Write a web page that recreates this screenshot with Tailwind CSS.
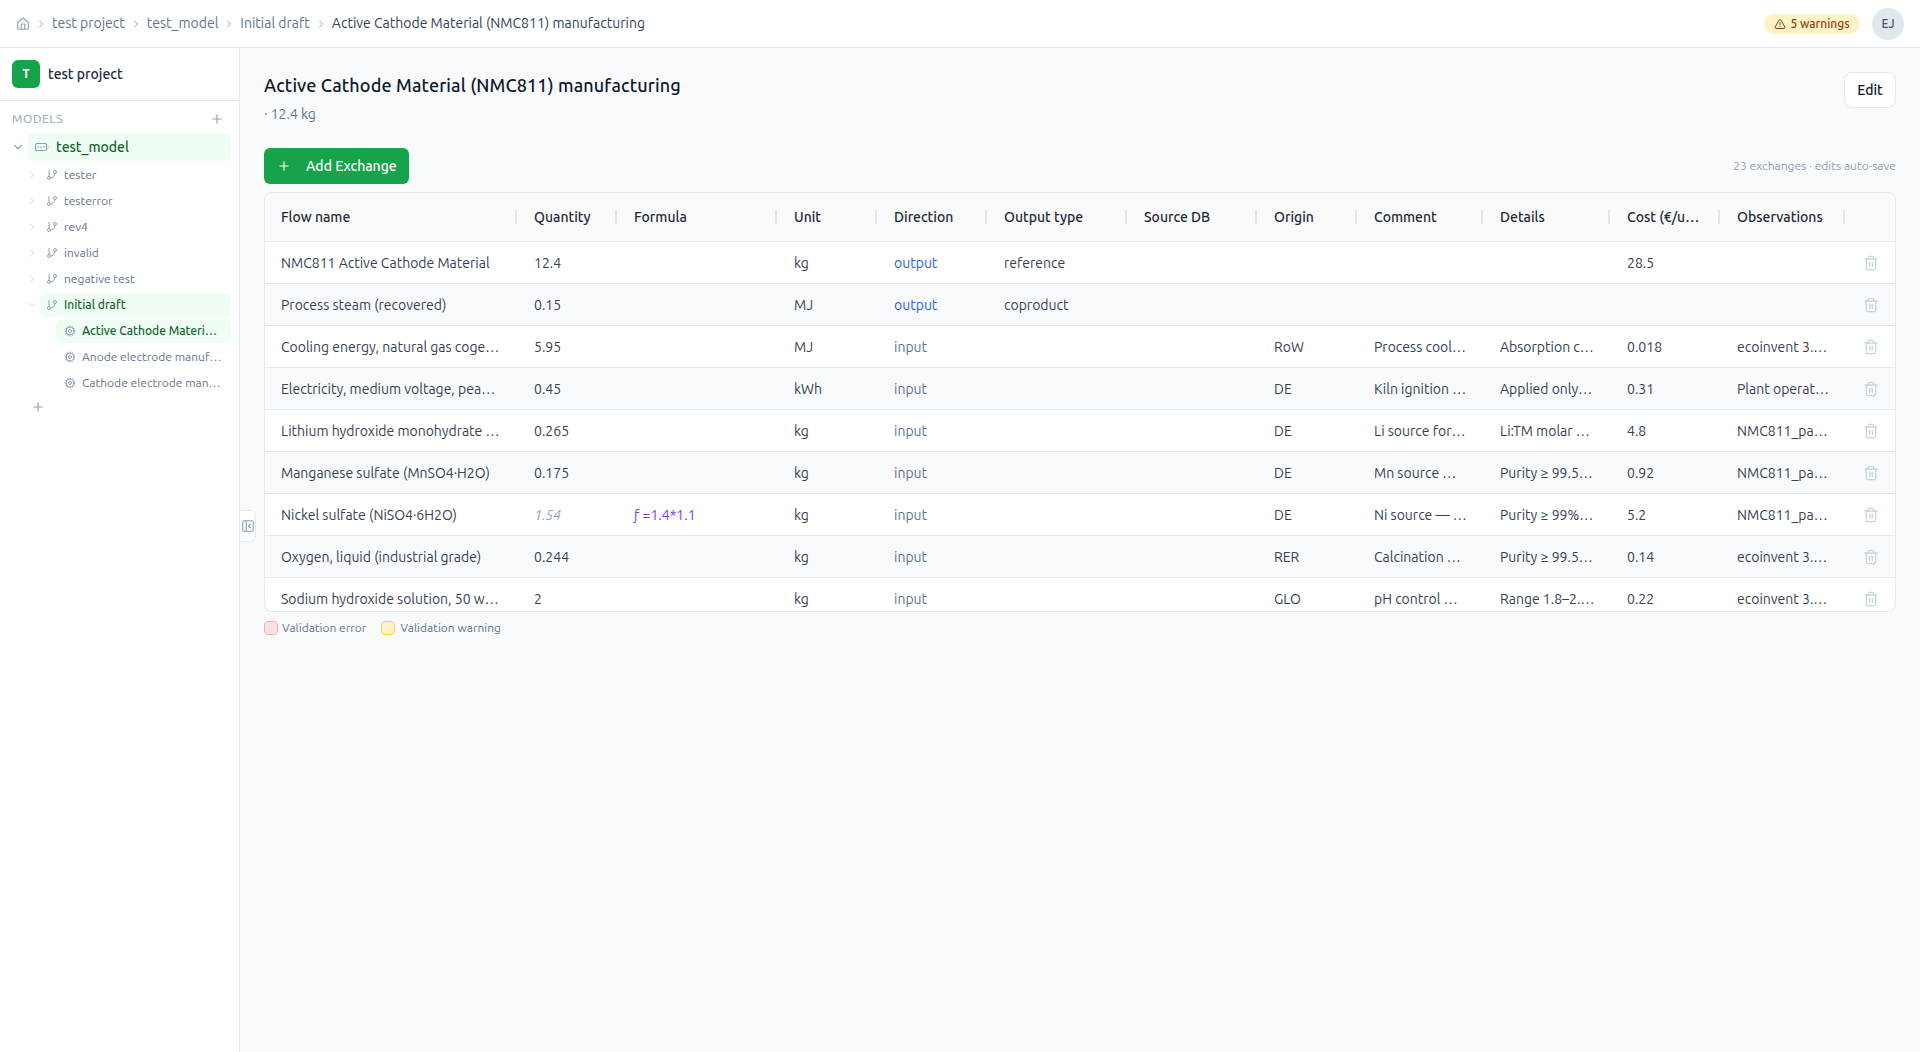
<!DOCTYPE html>
<html><head><meta charset="utf-8"><title>Exchanges</title><script src="https://cdn.jsdelivr.net/npm/@tailwindcss/browser@4"></script></head>
<body class="h-[1052px] overflow-hidden bg-white font-[Ubuntu,'Noto_Sans',sans-serif] text-[14px] text-gray-700">
<svg class="hidden"><defs>
<symbol id="chev-r" viewBox="0 0 24 24"><path d="m9 18 6-6-6-6"/></symbol>
<symbol id="chev-d" viewBox="0 0 24 24"><path d="m6 9 6 6 6-6"/></symbol>
<symbol id="plus" viewBox="0 0 24 24"><path d="M5 12h14"/><path d="M12 5v14"/></symbol>
<symbol id="branch" viewBox="0 0 24 24"><path d="M6 3v12"/><circle cx="18" cy="6" r="3"/><circle cx="6" cy="18" r="3"/><path d="M18 9a9 9 0 0 1-9 9"/></symbol>
<symbol id="cog" viewBox="0 0 24 24"><circle cx="12" cy="12" r="8"/><circle cx="12" cy="12" r="3"/><path d="M12 2v2M12 22v-2M17 20.66l-1-1.73M8 5.07 7 3.34M20.66 17l-1.73-1M3.34 7l1.73 1M20 12h2M2 12h2M20.66 7l-1.73 1M3.34 17l1.73-1M17 3.34l-1 1.73M8 18.93l-1 1.73"/></symbol>
<symbol id="trash" viewBox="0 0 24 24"><path d="M3 6h18"/><path d="M19 6v14a2 2 0 0 1-2 2H7a2 2 0 0 1-2-2V6"/><path d="M8 6V4a2 2 0 0 1 2-2h4a2 2 0 0 1 2 2v2"/><path d="M10 11v6"/><path d="M14 11v6"/></symbol>
</defs></svg>

<header class="flex h-12 items-center justify-between border-b border-slate-200 bg-white pl-4 pr-4">
  <nav class="flex items-center gap-[5px] text-slate-500">
    <svg class="h-3.5 w-3.5 fill-none stroke-slate-400 stroke-2" viewBox="0 0 24 24" stroke-linecap="round" stroke-linejoin="round"><path d="M15 21v-8a1 1 0 0 0-1-1h-4a1 1 0 0 0-1 1v8"/><path d="M3 10a2 2 0 0 1 .709-1.528l7-5.999a2 2 0 0 1 2.582 0l7 5.999A2 2 0 0 1 21 10v9a2 2 0 0 1-2 2H5a2 2 0 0 1-2-2z"/></svg>
    <svg class="h-3 w-3 fill-none stroke-slate-400 stroke-2" stroke-linecap="round" stroke-linejoin="round"><use href="#chev-r"/></svg>
    <span>test project</span>
    <svg class="h-3 w-3 fill-none stroke-slate-400 stroke-2" stroke-linecap="round" stroke-linejoin="round"><use href="#chev-r"/></svg>
    <span>test_model</span>
    <svg class="h-3 w-3 fill-none stroke-slate-400 stroke-2" stroke-linecap="round" stroke-linejoin="round"><use href="#chev-r"/></svg>
    <span>Initial draft</span>
    <svg class="h-3 w-3 fill-none stroke-slate-400 stroke-2" stroke-linecap="round" stroke-linejoin="round"><use href="#chev-r"/></svg>
    <span class="text-slate-700">Active Cathode Material (NMC811) manufacturing</span>
  </nav>
  <div class="flex items-center gap-3">
    <span class="flex h-5 w-24 items-center justify-center gap-1 rounded-full bg-[#fef3c7] text-[12px] font-medium text-[#92400e]">
      <svg class="h-3 w-3 fill-none stroke-[#92400e] stroke-2" viewBox="0 0 24 24" stroke-linecap="round" stroke-linejoin="round"><path d="m21.73 18-8-14a2 2 0 0 0-3.48 0l-8 14A2 2 0 0 0 4 21h16a2 2 0 0 0 1.73-3"/><path d="M12 9v4"/><path d="M12 17h.01"/></svg>
      5 warnings
    </span>
    <span class="flex h-8 w-8 items-center justify-center rounded-full bg-slate-200 text-[12px] font-medium text-slate-600">EJ</span>
  </div>
</header>

<div class="flex h-[1004px]">
  <aside class="w-60 shrink-0 border-r border-slate-200 bg-white">
    <div class="flex h-[53px] items-center gap-2 border-b border-slate-200 px-3">
      <span class="flex h-7 w-7 items-center justify-center rounded-md bg-[#16a34a] text-[12px] font-bold text-white">T</span>
      <span class="font-medium text-slate-800">test project</span>
    </div>
    <div class="flex h-8 items-center justify-between pl-3 pr-[15px] pt-[3px] text-[12px] tracking-[0.6px] text-slate-400">
      <span>MODELS</span>
      <svg class="h-3.5 w-3.5 fill-none stroke-slate-400 stroke-2" stroke-linecap="round"><use href="#plus"/></svg>
    </div>
    <ul class="flex flex-col gap-0.5 pr-2 text-[12px] text-slate-500">
      <li class="flex h-7 items-center">
        <span class="flex w-7 justify-center pl-[8px]"><svg class="h-3.5 w-3.5 fill-none stroke-slate-400 stroke-2" stroke-linecap="round" stroke-linejoin="round"><use href="#chev-d"/></svg></span>
        <div class="flex h-7 min-w-0 flex-1 items-center gap-[7px] rounded-md bg-green-50 pl-[7px] text-[14px] font-medium text-[#166534]">
          <svg class="h-3.5 w-3.5 fill-none stroke-slate-400 stroke-2" viewBox="0 0 24 24" stroke-linecap="round"><rect x="1" y="6" width="19" height="12" rx="2"/><path d="M5 12h1.6M9.7 12h1.6M14.4 12h1.6M23 12h.01"/></svg>
          <span>test_model</span>
        </div>
      </li>
      <li class="flex h-6 items-center">
        <span class="flex w-10 justify-center pl-6"><svg class="h-3 w-3 fill-none stroke-slate-300 stroke-2" stroke-linecap="round" stroke-linejoin="round"><use href="#chev-r"/></svg></span>
        <div class="flex flex-1 items-center gap-1.5 pl-[6px]"><svg class="h-3 w-3 fill-none stroke-slate-400 stroke-2" stroke-linecap="round"><use href="#branch"/></svg><span>tester</span></div>
      </li>
      <li class="flex h-6 items-center">
        <span class="flex w-10 justify-center pl-6"><svg class="h-3 w-3 fill-none stroke-slate-300 stroke-2" stroke-linecap="round" stroke-linejoin="round"><use href="#chev-r"/></svg></span>
        <div class="flex flex-1 items-center gap-1.5 pl-[6px]"><svg class="h-3 w-3 fill-none stroke-slate-400 stroke-2" stroke-linecap="round"><use href="#branch"/></svg><span>testerror</span></div>
      </li>
      <li class="flex h-6 items-center">
        <span class="flex w-10 justify-center pl-6"><svg class="h-3 w-3 fill-none stroke-slate-300 stroke-2" stroke-linecap="round" stroke-linejoin="round"><use href="#chev-r"/></svg></span>
        <div class="flex flex-1 items-center gap-1.5 pl-[6px]"><svg class="h-3 w-3 fill-none stroke-slate-400 stroke-2" stroke-linecap="round"><use href="#branch"/></svg><span>rev4</span></div>
      </li>
      <li class="flex h-6 items-center">
        <span class="flex w-10 justify-center pl-6"><svg class="h-3 w-3 fill-none stroke-slate-300 stroke-2" stroke-linecap="round" stroke-linejoin="round"><use href="#chev-r"/></svg></span>
        <div class="flex flex-1 items-center gap-1.5 pl-[6px]"><svg class="h-3 w-3 fill-none stroke-slate-400 stroke-2" stroke-linecap="round"><use href="#branch"/></svg><span>invalid</span></div>
      </li>
      <li class="flex h-6 items-center">
        <span class="flex w-10 justify-center pl-6"><svg class="h-3 w-3 fill-none stroke-slate-300 stroke-2" stroke-linecap="round" stroke-linejoin="round"><use href="#chev-r"/></svg></span>
        <div class="flex flex-1 items-center gap-1.5 pl-[6px]"><svg class="h-3 w-3 fill-none stroke-slate-400 stroke-2" stroke-linecap="round"><use href="#branch"/></svg><span>negative test</span></div>
      </li>
      <li class="flex h-6 items-center">
        <span class="flex w-10 justify-center pl-6"><svg class="h-3 w-3 fill-none stroke-slate-300 stroke-2" stroke-linecap="round" stroke-linejoin="round"><use href="#chev-d"/></svg></span>
        <div class="flex h-6 flex-1 items-center gap-1.5 rounded-md bg-green-50 pl-[6px] font-medium text-[#166534]"><svg class="h-3 w-3 fill-none stroke-slate-400 stroke-2" stroke-linecap="round"><use href="#branch"/></svg><span>Initial draft</span></div>
      </li>
      <li class="ml-14 flex h-6 items-center gap-1.5 rounded-md bg-green-50 pl-2 pr-[9px] font-medium text-[#166534]">
        <svg class="h-3 w-3 shrink-0 fill-none stroke-slate-400 stroke-2" stroke-linecap="round"><use href="#cog"/></svg><span class="truncate">Active Cathode Material (NMC811) manufacturing</span>
      </li>
      <li class="ml-14 flex h-6 items-center gap-1.5 pl-2 pr-[9px]">
        <svg class="h-3 w-3 shrink-0 fill-none stroke-slate-400 stroke-2" stroke-linecap="round"><use href="#cog"/></svg><span class="truncate">Anode electrode manufacturing</span>
      </li>
      <li class="ml-14 flex h-6 items-center gap-1.5 pl-2 pr-[9px]">
        <svg class="h-3 w-3 shrink-0 fill-none stroke-slate-400 stroke-2" stroke-linecap="round"><use href="#cog"/></svg><span class="truncate">Cathode electrode manufacturing</span>
      </li>
      <li class="flex h-5 items-center pl-[31px]"><svg class="h-3.5 w-3.5 fill-none stroke-slate-400 stroke-2" stroke-linecap="round"><use href="#plus"/></svg></li>
    </ul>
  </aside>

  <main class="relative min-w-0 flex-1 bg-slate-50 pl-6 pr-6 pt-6">
    <button class="absolute left-0 top-[462px] flex h-8 w-4 items-center justify-center rounded-r-md border border-l-0 border-slate-200 bg-white">
      <svg class="h-3.5 w-3.5 fill-none stroke-slate-400 stroke-2" viewBox="0 0 24 24" stroke-linecap="round" stroke-linejoin="round"><rect x="3" y="3" width="18" height="18" rx="2"/><path d="M9 3v18"/><path d="m16 15-3-3 3-3"/></svg>
    </button>
    <div class="flex items-start justify-between">
      <div>
        <h1 class="-mt-px text-[18px] leading-7 font-medium tracking-[0.13px] text-slate-900">Active Cathode Material (NMC811) manufacturing</h1>
        <p class="mt-[5px] leading-5 text-slate-500">· 12.4 kg</p>
      </div>
      <button class="h-9 w-[52px] rounded-lg border border-slate-200 bg-white font-medium text-slate-900">Edit</button>
    </div>
    <div class="mt-6 flex h-9 items-center justify-between">
      <button class="flex h-9 w-[145px] items-center gap-[15px] rounded-md bg-[#16a34a] pl-[13px] font-medium text-white">
        <svg class="h-3.5 w-3.5 fill-none stroke-white stroke-2" stroke-linecap="round"><use href="#plus"/></svg>
        Add Exchange
      </button>
      <span class="text-[12px] text-slate-400">23 exchanges · edits auto-save</span>
    </div>
    <div class="mt-2 h-[420px] overflow-hidden rounded-lg border border-slate-200 bg-white">
      <table class="w-[1630px] table-fixed border-separate border-spacing-0">
        <colgroup>
          <col class="w-[253px]"><col class="w-[100px]"><col class="w-[160px]"><col class="w-[100px]"><col class="w-[110px]"><col class="w-[140px]"><col class="w-[130px]"><col class="w-[100px]"><col class="w-[126px]"><col class="w-[127px]"><col class="w-[110px]"><col class="w-[125px]"><col class="w-[49px]">
        </colgroup>
        <thead>
          <tr class="h-[49px] bg-neutral-50 text-left font-medium text-gray-800">
            <th class="relative truncate border-b border-slate-200 px-4 font-medium">Flow name<span class="absolute right-[1px] top-[17px] h-3.5 w-0.5 bg-neutral-200"></span></th>
            <th class="relative truncate border-b border-slate-200 px-4 font-medium">Quantity<span class="absolute right-[1px] top-[17px] h-3.5 w-0.5 bg-neutral-200"></span></th>
            <th class="relative truncate border-b border-slate-200 px-4 font-medium">Formula<span class="absolute right-[1px] top-[17px] h-3.5 w-0.5 bg-neutral-200"></span></th>
            <th class="relative truncate border-b border-slate-200 px-4 font-medium">Unit<span class="absolute right-[1px] top-[17px] h-3.5 w-0.5 bg-neutral-200"></span></th>
            <th class="relative truncate border-b border-slate-200 px-4 font-medium">Direction<span class="absolute right-[1px] top-[17px] h-3.5 w-0.5 bg-neutral-200"></span></th>
            <th class="relative truncate border-b border-slate-200 px-4 font-medium">Output type<span class="absolute right-[1px] top-[17px] h-3.5 w-0.5 bg-neutral-200"></span></th>
            <th class="relative truncate border-b border-slate-200 px-4 font-medium">Source DB<span class="absolute right-[1px] top-[17px] h-3.5 w-0.5 bg-neutral-200"></span></th>
            <th class="relative truncate border-b border-slate-200 px-4 font-medium">Origin<span class="absolute right-[1px] top-[17px] h-3.5 w-0.5 bg-neutral-200"></span></th>
            <th class="relative truncate border-b border-slate-200 px-4 font-medium">Comment<span class="absolute right-[1px] top-[17px] h-3.5 w-0.5 bg-neutral-200"></span></th>
            <th class="relative truncate border-b border-slate-200 px-4 font-medium">Details<span class="absolute right-[1px] top-[17px] h-3.5 w-0.5 bg-neutral-200"></span></th>
            <th class="relative truncate border-b border-slate-200 px-4 font-medium">Cost (€/unit)<span class="absolute right-[1px] top-[17px] h-3.5 w-0.5 bg-neutral-200"></span></th>
            <th class="relative truncate border-b border-slate-200 px-4 font-medium">Observations<span class="absolute right-[1px] top-[17px] h-3.5 w-0.5 bg-neutral-200"></span></th>
            <th class="border-b border-slate-200"></th>
          </tr>
        </thead>
        <tbody class="[&_td]:h-[42px] [&_td]:truncate [&_td]:border-b [&_td]:border-slate-200 [&_td]:px-4 [&_td:not(:last-child)]:pt-[2px] [&_tr:nth-child(even)]:bg-slate-50">
          <tr><td>NMC811 Active Cathode Material</td><td>12.4</td><td></td><td>kg</td><td class="text-[#2563eb]">output</td><td>reference</td><td></td><td></td><td></td><td></td><td>28.5</td><td></td><td><svg class="mx-auto h-4 w-4 fill-none stroke-slate-300 stroke-2" stroke-linecap="round" stroke-linejoin="round"><use href="#trash"/></svg></td></tr>
          <tr><td>Process steam (recovered)</td><td>0.15</td><td></td><td>MJ</td><td class="text-[#2563eb]">output</td><td>coproduct</td><td></td><td></td><td></td><td></td><td></td><td></td><td><svg class="mx-auto h-4 w-4 fill-none stroke-slate-300 stroke-2" stroke-linecap="round" stroke-linejoin="round"><use href="#trash"/></svg></td></tr>
          <tr><td>Cooling energy, natural gas cogeneration</td><td>5.95</td><td></td><td>MJ</td><td class="text-slate-500">input</td><td></td><td></td><td>RoW</td><td>Process cooling demand</td><td>Absorption chiller COP</td><td>0.018</td><td>ecoinvent 3.10 market</td><td><svg class="mx-auto h-4 w-4 fill-none stroke-slate-300 stroke-2" stroke-linecap="round" stroke-linejoin="round"><use href="#trash"/></svg></td></tr>
          <tr><td>Electricity, medium voltage, peak load</td><td>0.45</td><td></td><td>kWh</td><td class="text-slate-500">input</td><td></td><td></td><td>DE</td><td>Kiln ignition and auxiliaries</td><td>Applied only to peak</td><td>0.31</td><td>Plant operator data</td><td><svg class="mx-auto h-4 w-4 fill-none stroke-slate-300 stroke-2" stroke-linecap="round" stroke-linejoin="round"><use href="#trash"/></svg></td></tr>
          <tr><td>Lithium hydroxide monohydrate (LiOH·H2O)</td><td>0.265</td><td></td><td>kg</td><td class="text-slate-500">input</td><td></td><td></td><td>DE</td><td>Li source for precursor</td><td>Li:TM molar ratio 1.03</td><td>4.8</td><td>NMC811_patent_data</td><td><svg class="mx-auto h-4 w-4 fill-none stroke-slate-300 stroke-2" stroke-linecap="round" stroke-linejoin="round"><use href="#trash"/></svg></td></tr>
          <tr><td>Manganese sulfate (MnSO4·H2O)</td><td>0.175</td><td></td><td>kg</td><td class="text-slate-500">input</td><td></td><td></td><td>DE</td><td>Mn source — secondary</td><td>Purity ≥ 99.5% battery grade</td><td>0.92</td><td>NMC811_patent_data</td><td><svg class="mx-auto h-4 w-4 fill-none stroke-slate-300 stroke-2" stroke-linecap="round" stroke-linejoin="round"><use href="#trash"/></svg></td></tr>
          <tr><td>Nickel sulfate (NiSO4·6H2O)</td><td class="text-slate-400 italic">1.54</td><td class="text-[#7c3aed]">ƒ =1.4*1.1</td><td>kg</td><td class="text-slate-500">input</td><td></td><td></td><td>DE</td><td>Ni source — main precursor</td><td>Purity ≥ 99% battery grade</td><td>5.2</td><td>NMC811_patent_data</td><td><svg class="mx-auto h-4 w-4 fill-none stroke-slate-300 stroke-2" stroke-linecap="round" stroke-linejoin="round"><use href="#trash"/></svg></td></tr>
          <tr><td>Oxygen, liquid (industrial grade)</td><td>0.244</td><td></td><td>kg</td><td class="text-slate-500">input</td><td></td><td></td><td>RER</td><td>Calcination atmosphere</td><td>Purity ≥ 99.5% oxygen</td><td>0.14</td><td>ecoinvent 3.10 market</td><td><svg class="mx-auto h-4 w-4 fill-none stroke-slate-300 stroke-2" stroke-linecap="round" stroke-linejoin="round"><use href="#trash"/></svg></td></tr>
          <tr><td>Sodium hydroxide solution, 50 w% NaOH</td><td>2</td><td></td><td>kg</td><td class="text-slate-500">input</td><td></td><td></td><td>GLO</td><td>pH control — buffer</td><td>Range 1.8–2.2 per batch</td><td>0.22</td><td>ecoinvent 3.10 market</td><td><svg class="mx-auto h-4 w-4 fill-none stroke-slate-300 stroke-2" stroke-linecap="round" stroke-linejoin="round"><use href="#trash"/></svg></td></tr>
        </tbody>
      </table>
    </div>
    <div class="mt-[8px] flex items-center text-[12px] leading-4 text-slate-500">
      <span class="h-3.5 w-3.5 rounded border border-[#fca5a5] bg-[#fee2e2]"></span><span class="ml-[4px]">Validation error</span>
      <span class="ml-[15px] h-3.5 w-3.5 rounded border border-[#fcd34d] bg-[#fef3c7]"></span><span class="ml-[5px]">Validation warning</span>
    </div>
  </main>
</div>
</body></html>
